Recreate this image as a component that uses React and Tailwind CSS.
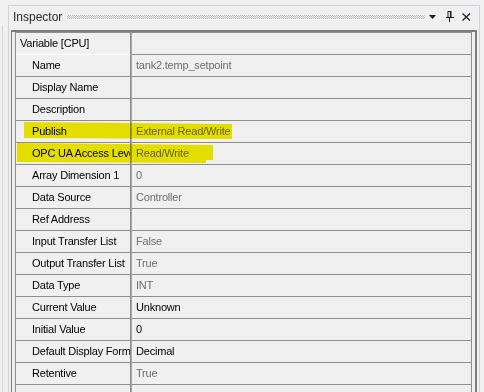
import React from "react";

const rows = [
  { label: "Variable [CPU]", value: "", cat: true },
  { label: "Name", value: "tank2.temp_setpoint", gray: true },
  { label: "Display Name", value: "" },
  { label: "Description", value: "" },
  { label: "Publish", value: "External Read/Write", gray: true },
  { label: "OPC UA Access Level", value: "Read/Write", gray: true },
  { label: "Array Dimension 1", value: "0", gray: true },
  { label: "Data Source", value: "Controller", gray: true },
  { label: "Ref Address", value: "" },
  { label: "Input Transfer List", value: "False", gray: true },
  { label: "Output Transfer List", value: "True", gray: true },
  { label: "Data Type", value: "INT", gray: true },
  { label: "Current Value", value: "Unknown" },
  { label: "Initial Value", value: "0" },
  { label: "Default Display Format", value: "Decimal" },
  { label: "Retentive", value: "True", gray: true },
  { label: "", value: "" },
];

function Row({ r }) {
  return (
    <div className="flex h-[22px]">
      <div
        className={
          "w-[115px] h-[22px] border-r border-[#8e8e8e] border-b flex items-center overflow-hidden whitespace-nowrap " +
          (r.cat ? "pl-[4px] border-b-[#ffffff]" : "pl-[16px] border-b-[#8e8e8e]")
        }
      >
        <span className="text-black">{r.label}</span>
      </div>
      <div className="flex-1 h-[22px] border-l border-[#a9a9a9] border-b border-b-[#8e8e8e] flex items-center pl-[4px] overflow-hidden whitespace-nowrap">
        <span className={r.gray ? "text-[#6d6d6d]" : "text-black"}>{r.value}</span>
      </div>
    </div>
  );
}

export default function App() {
  return (
    <div
      className="w-[484px] h-[392px] bg-[#f0f0f0] relative overflow-hidden flex"
      style={{ fontFamily: '"Liberation Sans", Arial, sans-serif' }}
    >
      <div className="w-[2px]" />
      <div className="w-px mt-[25px] bg-[#d6d6d6]" />
      <div className="w-[5px]" />
      {/* panel */}
      <div className="w-[472px] mt-[5px] border-l border-r border-t border-[#cdd3dd] flex flex-col">
        {/* title bar */}
        <div className="h-[21px] flex items-center pl-[4px] pr-[8px] shrink-0">
          <span className="text-[12px] text-[#2b2b2b] leading-none">Inspector</span>
          <div className="flex-1 ml-[5px] mr-[4px] h-[4px] bg-[image:conic-gradient(#bdbdbd_25%,transparent_0_50%,#bdbdbd_0_75%,transparent_0)] bg-[length:2px_2px]" />
          <svg width="8" height="5" viewBox="0 0 8 5" className="mr-[9px] mt-[1px]">
            <polygon points="0,0 7,0 3.5,4" fill="#1a1a1a" />
          </svg>
          <svg width="8" height="11" viewBox="0 0 8 11" className="mr-[8px]">
            <rect x="2" y="0.5" width="3" height="6" fill="none" stroke="#1a1a1a" strokeWidth="1" />
            <rect x="4" y="0.5" width="1" height="6" fill="#1a1a1a" />
            <rect x="0" y="6" width="8" height="1" fill="#1a1a1a" />
            <rect x="3" y="7" width="1" height="4" fill="#1a1a1a" />
          </svg>
          <svg width="9" height="8" viewBox="0 0 9 8">
            <path d="M0.5 0.5 L8 7.5 M8 0.5 L0.5 7.5" stroke="#1a1a1a" strokeWidth="1.2" />
          </svg>
        </div>
        {/* content */}
        <div className="flex-1 pl-[2px] pr-[2px] pt-[3px] flex">
          <div className="flex-1 border-l border-t-2 border-r-2 border-[#7d7d7d] pl-[3px] pr-[3px] flex">
            <div className="flex-1 border-l border-r border-t border-[#8e8e8e] text-[11px] tracking-[-0.2px] leading-none">
              {rows.map((r, i) => (
                <Row key={i} r={r} />
              ))}
            </div>
          </div>
        </div>
      </div>
      {/* highlighter annotations */}
      <svg
        className="absolute left-0 top-0 pointer-events-none mix-blend-multiply"
        width="484"
        height="392"
        viewBox="0 0 484 392"
      >
        <polygon points="24,122 232,124 232,139 24,138" fill="#f3eb00" />
        <polygon points="17,143 213,145 213,160 206,160 206,163 17,162" fill="#f3eb00" />
      </svg>
    </div>
  );
}
